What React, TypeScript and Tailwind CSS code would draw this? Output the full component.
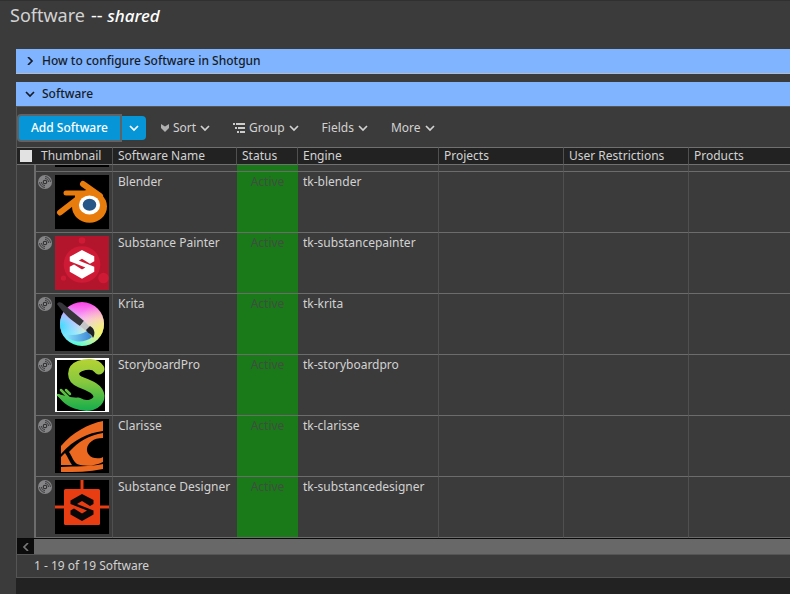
import React from "react";

function Chevron({ className = "", d = "M1 2l4 4 4-4" }: { className?: string; d?: string }) {
  return (
    <svg viewBox="0 0 10 8" className={`h-2 w-[10px] ${className}`} fill="none" stroke="currentColor" strokeWidth="1.7" aria-hidden="true">
      <path d={d} />
    </svg>
  );
}

function Disc() {
  return (
    <svg viewBox="0 0 14 14" className="h-[14px] w-[14px] shrink-0" fill="none" aria-hidden="true">
      <circle cx="7" cy="7" r="7" fill="#858587" />
      <circle cx="7" cy="7" r="2.300" fill="#343436" />
      <circle cx="7" cy="7" r="1" fill="#a2a2a2" />
      <path d="M7 3.4A3.6 3.6 0 0 1 10.6 7M7 1.6A5.4 5.4 0 0 1 12.4 7M7 10.6A3.6 3.6 0 0 1 3.4 7M7 12.4A5.4 5.4 0 0 1 1.6 7" stroke="#3e3e40" strokeWidth="1" />
    </svg>
  );
}

function Blender() {
  return (
    <>
      <path d="M28 9l17 12M5 37.500l22-17" stroke="#e87d0d" strokeWidth="6" strokeLinecap="round" />
      <path d="M11 18h26" stroke="#e87d0d" strokeWidth="5" strokeLinecap="round" />
      <ellipse cx="34.5" cy="31.5" rx="17.500" ry="16.3" fill="#e87d0d" />
      <path d="M20 20l12-5 12 8-24 5z" fill="#e87d0d" />
      <ellipse cx="34.5" cy="30" rx="10.6" ry="9.6" fill="#fff" />
      <ellipse cx="34.5" cy="29.8" rx="6.8" ry="6" fill="#265787" />
    </>
  );
}

const hexS = "M27 14L38.500 20v4l-3.500 2-8-5-5 3 16.500 6.500v4L27 41 15.500 34.500v-4l3.500-2 8 5 5-3-16.500-6.500v-3.500z";

function Painter() {
  return (
    <>
      <path d="M0 0h54v54H0z" fill="#b3152c" />
      <circle cx="27" cy="28.500" r="18.300" fill="#cf1a35" />
      <circle cx="27" cy="4.500" r="3.300" fill="#cf1a35" />
      <circle cx="48.500" cy="42" r="5.300" fill="#cf1a35" />
      <circle cx="8.500" cy="42" r="2.600" fill="#cf1a35" />
      <path d={hexS} transform="translate(0 .8)" fill="#fff" stroke="#fff" strokeWidth="1.500" />
    </>
  );
}

function Krita() {
  return (
    <>
      <defs>
        <linearGradient id="kBase" x1="0" y1="0" x2="0" y2="1">
          <stop stopColor="#fb44e5" />
          <stop offset=".4" stopColor="#f6b3ff" />
          <stop offset=".7" stopColor="#a9ecff" />
          <stop offset="1" stopColor="#40ffd0" />
        </linearGradient>
        <radialGradient id="kYellow" cx="1" cy=".7" r=".7">
          <stop stopColor="#fff34b" />
          <stop offset="1" stopColor="#fff3a0" stopOpacity="0" />
        </radialGradient>
        <radialGradient id="kBlue" cx="0" cy=".55" r=".55">
          <stop stopColor="#35dcff" />
          <stop offset="1" stopColor="#8ddcff" stopOpacity="0" />
        </radialGradient>
        <linearGradient id="kPaint">
          <stop stopColor="#8deaff" />
          <stop offset="1" stopColor="#3b83d4" />
        </linearGradient>
      </defs>
      <circle cx="27" cy="27" r="22" fill="url(#kBase)" />
      <circle cx="27" cy="27" r="22" fill="url(#kYellow)" />
      <circle cx="27" cy="27" r="22" fill="url(#kBlue)" />
      <path d="M9 37c8 2 17 1 23-3l5 6c-7 6-20 7-28-3z" fill="url(#kPaint)" />
      <path d="M2 7c1-2 3-2 5-1l22 18-4 5C17 24 9 17 2 7z" fill="#35353a" />
      <path d="M29 24l6 6-4 4-6-5z" fill="#c5c5c8" />
      <path d="M31 33l4-4c4 2 6 7 3 12-1-4-5-4-7-8z" fill="#202024" />
    </>
  );
}

function Storyboard() {
  return (
    <>
      <defs>
        <linearGradient id="sGreen" x1="0" y1="0" x2="0" y2="54" gradientUnits="userSpaceOnUse">
          <stop stopColor="#b8d433" />
          <stop offset=".45" stopColor="#86c83e" />
          <stop offset="1" stopColor="#10ac4c" />
        </linearGradient>
      </defs>
      <path d="M0 0h54v54H0z" fill="#fff" />
      <path d="M2 2h48v51H2z" fill="#000" />
      <path d="M44 11C40 5 31 6 25 8 17 11 16 20 25 24c8 3 18 6 19 14 0 9-13 12-21 7" fill="none" stroke="url(#sGreen)" strokeWidth="11" strokeLinecap="round" />
      <path d="M3 36l12 3 9 1 4 12C15 51 8 45 3 38z" fill="url(#sGreen)" />
      <path d="M6 32l12 12M11 32l4 4M3 37l12 9" stroke="url(#sGreen)" strokeWidth="2.500" strokeLinecap="round" />
    </>
  );
}

function Clarisse() {
  return (
    <path d="M48 2v10C33 14 19 20 6 35v-8C18 13 33 5 48 2zM48 14v5c-21 0-21 23-2 20l2-1v5c-10 5-20 4-26 2-4-3-5-8-8-12 9-10 20-17 34-19zM6 38l4-4c3 4 4 8 7 12H6zM6 48c15-1 28 0 42-3v5c-14 3-28 3-42 3z" fill="#eb6920" />
  );
}

function Designer() {
  return (
    <>
      <path d="M0 25.500h54v3H0zM25.500 0h3v12h-3z" fill="#e83d12" />
      <rect x="9" y="9" width="36" height="36" rx="1.500" fill="#e83d12" />
      <path d={hexS} fill="#080808" />
    </>
  );
}

const rows = [
  { name: "Blender", engine: "tk-blender", art: <Blender /> },
  { name: "Substance Painter", engine: "tk-substancepainter", art: <Painter /> },
  { name: "Krita", engine: "tk-krita", art: <Krita /> },
  { name: "StoryboardPro", engine: "tk-storyboardpro", art: <Storyboard /> },
  { name: "Clarisse", engine: "tk-clarisse", art: <Clarisse /> },
  { name: "Substance Designer", engine: "tk-substancedesigner", art: <Designer /> },
];

const heads = ["Thumbnail", "Software Name", "Status", "Engine", "Projects", "User Restrictions", "Products"];
const menu = "flex items-center gap-1 text-[12px]";
const line = "border-r border-r-[#505050]";
const bottom = "border-b border-b-[#6c6c6c]";

export default function App() {
  return (
    <main className="min-h-screen overflow-hidden border-t border-[#303030] bg-[#3b3b3b] font-['Noto_Sans','Open_Sans',sans-serif] text-[12px] text-[#d2d2d2]">
      <h1 className="flex h-12 items-start gap-[6px] pl-[10px] pt-[2px] text-[18px] leading-6">
        <span>Software</span>
        <span className="text-white">-- <em className="text-[17px] font-medium">shared</em></span>
      </h1>
      <div className="ml-4 bg-[#222222]">
        <button aria-expanded="false" className="flex h-[25px] w-full items-center gap-[7px] border-b border-[#b4bcc8] bg-[#80b4ff] pl-[9px] text-left font-medium text-[#161c28]">
          <Chevron d="M3 0l4 4-4 4" />
          How to configure Software in Shotgun
        </button>
        <div className="h-2 bg-[#3b3b3b]" />
        <button aria-expanded="true" className="flex h-6 w-full items-center gap-[7px] bg-[#80b4ff] pl-[9px] text-left font-medium text-[#161c28]">
          <Chevron />
          Software
        </button>
        <section className="border-l border-t border-[#555555] bg-[#3b3b3b]">
          <div className="flex h-10 items-center gap-[23px] pt-[2px]">
            <div className="flex items-center">
              <button className="h-7 rounded-l border-2 border-[#606366] bg-[#0696d7] px-3 font-medium text-white">Add Software</button>
              <button aria-label="More add options" className="flex h-6 w-6 items-center justify-center rounded-r bg-[#0696d7] text-white"><Chevron /></button>
            </div>
            <button className={`${menu} -ml-2`}>
              <svg viewBox="0 0 8 8" className="h-2 w-2" aria-hidden="true"><path d="M0 0l4 2.500L8 0v4L4 8 0 4z" fill="#b0b0b0" /></svg>
              Sort <Chevron />
            </button>
            <button className={menu}>
              <svg viewBox="0 0 12 10" className="h-[10px] w-3" aria-hidden="true"><path d="M0 0h2v2H0zM3 0h9v2H3zM2 4h2v2H2zM5 4h7v2H5zM4 8h2v2H4zM7 8h5v2H7z" fill="#cccccc" /></svg>
              Group <Chevron />
            </button>
            <button className={menu}>Fields <Chevron /></button>
            <button className={menu}>More <Chevron /></button>
          </div>
          <table className="w-full table-fixed border-separate border-spacing-0 text-left">
            <colgroup>
              <col className="w-[17px]" />
              <col className="w-[79px]" />
              <col className="w-[124px]" />
              <col className="w-[61px]" />
              <col className="w-[141px]" />
              <col className="w-[125px]" />
              <col className="w-[125px]" />
              <col />
            </colgroup>
            <thead className="bg-[#222222]">
              <tr className="h-[18px]">
                <th className="border-y border-[#707070] p-0 pl-[3px]">
                  <input type="checkbox" aria-label="Select all software" className="block h-3 w-3 appearance-none bg-[#e2e2e2]" />
                </th>
                {heads.map((h, i) => (
                  <th key={h} className={`whitespace-nowrap border-y border-y-[#707070] p-0 font-normal leading-4 ${i === 0 ? "pl-[7px]" : "pl-[5px]"} ${i < 6 ? line : ""}`}>{h}</th>
                ))}
              </tr>
            </thead>
            <tbody>
              <tr className="h-[7px]">
                <td className="p-0" />
                <td className={`border-l-2 border-l-[#6c6c6c] p-0 pl-[19px] ${bottom} ${line}`}><div className="mb-1 h-[2px] w-[54px] bg-black" /></td>
                <td className={`p-0 ${bottom}`} />
                <td className={`bg-[#1a7a1a] p-0 ${bottom}`} />
                <td className={`p-0 ${bottom} ${line}`} />
                <td className={`p-0 ${bottom} ${line}`} />
                <td className={`p-0 ${bottom} ${line}`} />
                <td className={`p-0 ${bottom}`} />
              </tr>
              {rows.map((r) => (
                <tr key={r.name} className="h-[61px] align-top leading-4">
                  <td className="p-0" />
                  <td className={`border-l-2 border-l-[#6c6c6c] p-0 pl-[2px] pt-[3px] ${bottom} ${line}`}>
                    <div className="flex gap-[3px]">
                      <Disc />
                      <svg viewBox="0 0 54 54" role="img" aria-label={r.name} className="h-[54px] w-[54px] bg-black" fill="none">{r.art}</svg>
                    </div>
                  </td>
                  <td className={`p-0 pl-[5px] pt-[2px] ${bottom}`}>{r.name}</td>
                  <td className={`bg-[#1a7a1a] p-0 pt-[2px] text-center text-[#3f4f3f] ${bottom}`}>Active</td>
                  <td className={`p-0 pl-[5px] pt-[2px] ${bottom} ${line}`}>{r.engine}</td>
                  <td className={`p-0 ${bottom} ${line}`} />
                  <td className={`p-0 ${bottom} ${line}`} />
                  <td className={`p-0 ${bottom}`} />
                </tr>
              ))}
            </tbody>
          </table>
          <div className="flex h-4 border-t border-[#0a0a0a] bg-[#686868]">
            <button aria-label="Scroll left" className="flex w-[17px] items-center justify-center bg-[#0c0c0c] text-[#777777]"><Chevron d="M7 0L3 4l4 4" /></button>
          </div>
          <p className="h-6 border-y border-[#555555] pl-[17px] leading-[22px]">1 - 19 of 19 Software</p>
        </section>
        <div className="h-4" />
      </div>
    </main>
  );
}
